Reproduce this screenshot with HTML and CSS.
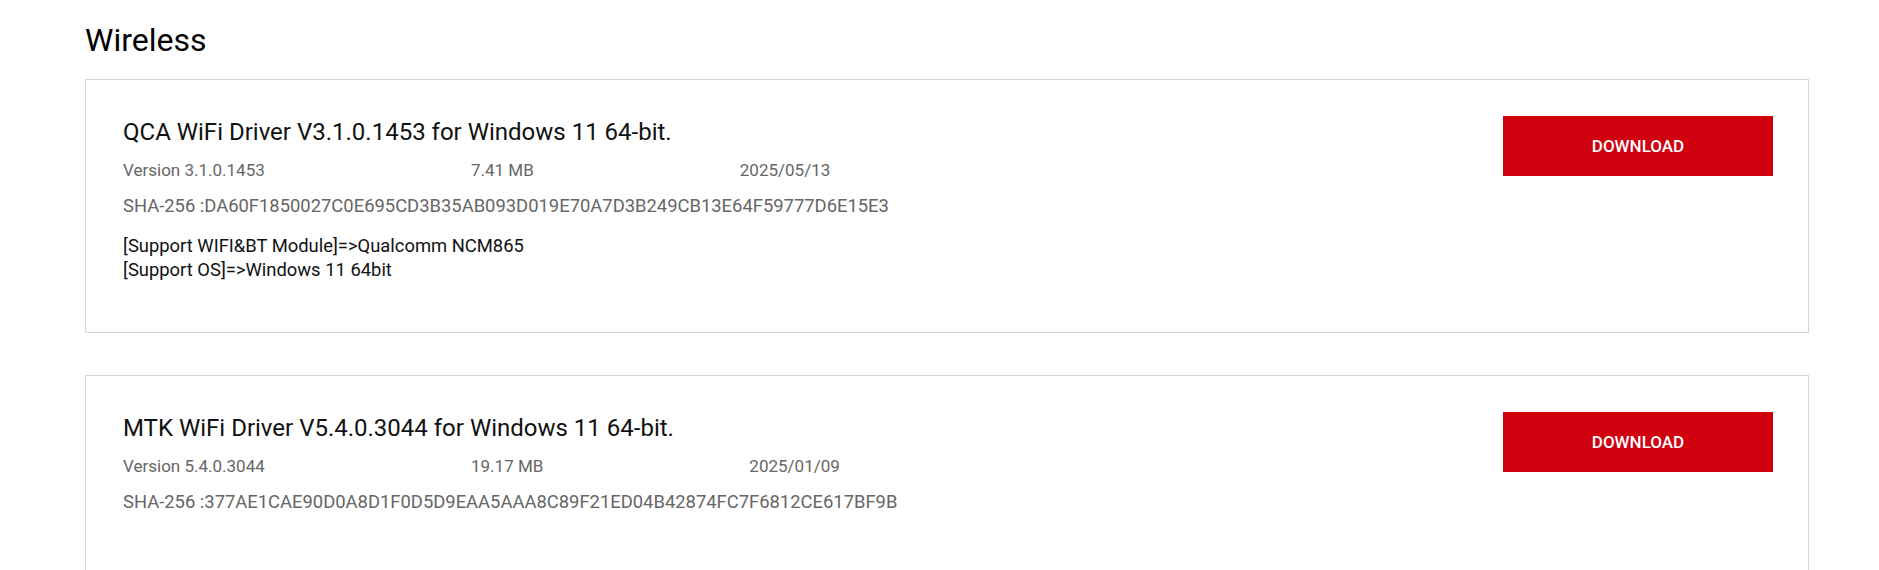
FILE: index.html
```html
<!DOCTYPE html>
<html lang="en">
<head>
<meta charset="utf-8">
<title>Wireless</title>
<link rel="stylesheet" href="styles.css">
</head>
<body>
<main class="page">
  <h2 class="section-title">Wireless</h2>
  <div class="card">
    <div class="info">
      <h3 class="driver-title">QCA WiFi Driver V3.1.0.1453 for Windows 11 64-bit.</h3>
      <div class="meta">
        <span class="meta-version">Version 3.1.0.1453</span>
        <span class="meta-size">7.41 MB</span>
        <span class="meta-date">2025/05/13</span>
      </div>
      <div class="sha">SHA-256 :DA60F1850027C0E695CD3B35AB093D019E70A7D3B249CB13E64F59777D6E15E3</div>
      <div class="notes">[Support WIFI&amp;BT Module]=&gt;Qualcomm NCM865<br>[Support OS]=&gt;Windows 11 64bit</div>
    </div>
    <a class="btn" href="#">DOWNLOAD</a>
  </div>
  <div class="card">
    <div class="info">
      <h3 class="driver-title">MTK WiFi Driver V5.4.0.3044 for Windows 11 64-bit.</h3>
      <div class="meta">
        <span class="meta-version">Version 5.4.0.3044</span>
        <span class="meta-size">19.17 MB</span>
        <span class="meta-date">2025/01/09</span>
      </div>
      <div class="sha">SHA-256 :377AE1CAE90D0A8D1F0D5D9EAA5AAA8C89F21ED04B42874FC7F6812CE617BF9B</div>
      <div class="notes notes-empty"></div>
    </div>
    <a class="btn" href="#">DOWNLOAD</a>
  </div>
</main>
</body>
</html>
```

FILE: styles.css
```css
* { box-sizing: border-box; }
html, body { margin: 0; padding: 0; background: #fff; }
body {
  font-family: Roboto, "Liberation Sans", sans-serif;
  color: #111;
}
.page {
  padding: 19px 70px 0 85px;
}
.section-title {
  margin: 0 0 17px;
  font-size: 32px;
  line-height: 43px;
  font-weight: 400;
  color: #000;
}
.card {
  display: flex;
  justify-content: space-between;
  align-items: flex-start;
  border: 1px solid #d6d6d6;
  padding: 36px 35px 50px 37px;
  margin-bottom: 42px;
}
.info { display: flex; flex-direction: column; }
.driver-title {
  margin: 0 0 8px;
  font-size: 24px;
  line-height: 33px;
  font-weight: 400;
  color: #111;
}
.meta {
  display: flex;
  font-size: 17px;
  line-height: 27px;
  color: #666;
  margin-bottom: 8px;
}
.meta-version { width: 348px; flex: none; }
.meta-size { margin-right: 206px; }
.sha {
  font-size: 18.4px;
  line-height: 27px;
  color: #666;
  margin-bottom: 15px;
}
.notes {
  font-size: 18.4px;
  line-height: 24px;
  color: #111;
  min-height: 48px;
}
.btn {
  flex: none;
  width: 270px;
  height: 60px;
  display: flex;
  align-items: center;
  justify-content: center;
  background: #d0000f;
  color: #fff;
  text-decoration: none;
  font-size: 17px;
  font-weight: 500;
}
```
